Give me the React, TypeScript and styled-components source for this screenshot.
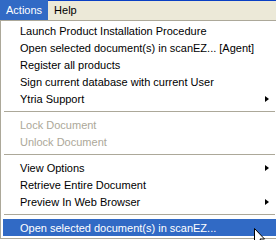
import styled, { createGlobalStyle } from 'styled-components';

const GlobalStyle = createGlobalStyle`
  html, body {
    margin: 0;
    padding: 0;
    background: #ffffff;
  }
  body {
    font-family: Tahoma, "Liberation Sans", Arial, sans-serif;
    font-size: 11px;
  }
`;

const Screen = styled.div`
  position: relative;
  width: 276px;
  height: 240px;
  overflow: hidden;
  background: #ffffff;
`;

const MenuBar = styled.div`
  display: flex;
  height: 19px;
  border-top: 1px solid #0a3fc4;
  background: #ece9d8;
`;

const BarItem = styled.div<{ active?: boolean }>`
  display: flex;
  align-items: center;
  padding: 0 6px;
  margin-top: -1px;
  height: 20px;
  color: ${({ active }) => (active ? '#ffffff' : '#000000')};
  background: ${({ active }) => (active ? '#316ac5' : 'transparent')};
`;

const Dropdown = styled.div`
  width: 273px;
  border: 1px solid #aca899;
  padding: 1px 2px 2px 2px;
  background: #ffffff;
`;

const Row = styled.div<{ disabled?: boolean; selected?: boolean }>`
  display: flex;
  align-items: center;
  height: 17px;
  padding: 0 7px 0 17px;
  color: ${({ disabled, selected }) =>
    selected ? '#ffffff' : disabled ? '#aca899' : '#000000'};
  background: ${({ selected }) => (selected ? '#316ac5' : 'transparent')};
  white-space: nowrap;
`;

const Label = styled.span`
  flex: 1;
`;

const Arrow = styled.span`
  width: 0;
  height: 0;
  border-top: 3.5px solid transparent;
  border-bottom: 3.5px solid transparent;
  border-left: 4px solid #000000;
`;

const Separator = styled.div`
  height: 9px;
  display: flex;
  align-items: center;
  padding: 0 1px;
  &::after {
    content: '';
    flex: 1;
    height: 1px;
    background: #aca899;
  }
`;

const Cursor = styled.svg`
  position: absolute;
  left: 254px;
  top: 228px;
`;

type Entry = { label: string; sub?: boolean; disabled?: boolean; selected?: boolean } | 'sep';

const entries: Entry[] = [
  { label: 'Launch Product Installation Procedure' },
  { label: 'Open selected document(s) in scanEZ... [Agent]' },
  { label: 'Register all products' },
  { label: 'Sign current database with current User' },
  { label: 'Ytria Support', sub: true },
  'sep',
  { label: 'Lock Document', disabled: true },
  { label: 'Unlock Document', disabled: true },
  'sep',
  { label: 'View Options', sub: true },
  { label: 'Retrieve Entire Document' },
  { label: 'Preview In Web Browser', sub: true },
  'sep',
  { label: 'Open selected document(s) in scanEZ...', selected: true },
];

export default function App() {
  return (
    <Screen>
      <GlobalStyle />
      <MenuBar>
        <BarItem active>Actions</BarItem>
        <BarItem>Help</BarItem>
      </MenuBar>
      <Dropdown>
        {entries.map((e, i) =>
          e === 'sep' ? (
            <Separator key={i} />
          ) : (
            <Row key={i} disabled={e.disabled} selected={e.selected}>
              <Label>{e.label}</Label>
              {e.sub && <Arrow />}
            </Row>
          )
        )}
      </Dropdown>
      <Cursor width="12" height="19" viewBox="0 0 12 19">
        <path
          d="M0.5 0.5 L0.5 15.5 L4 12 L6.5 17.5 L8.5 16.5 L6 11 L10.5 11 Z"
          fill="#ffffff"
          stroke="#000000"
          strokeWidth="1"
        />
      </Cursor>
    </Screen>
  );
}
